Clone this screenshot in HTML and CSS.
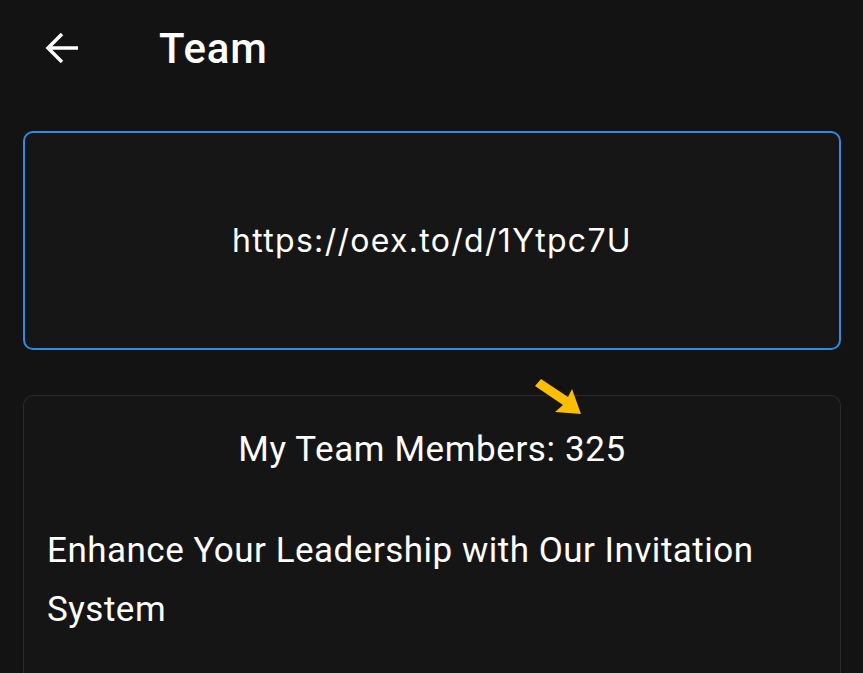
FILE: index.html
```html
<!DOCTYPE html>
<html lang="en">
<head>
  <meta charset="UTF-8">
  <title>Team</title>
  <link rel="stylesheet" href="styles.css">
</head>
<body>

  <!-- HEADER -->
  <div class="header">
    <span class="back-btn">
      <svg width="40" height="40" viewBox="0 0 40 40">
        <path d="M36 20H6M20 6L6 20L20 34" fill="none" stroke="#fff" stroke-width="3.5" stroke-linecap="butt" stroke-linejoin="miter"/>
      </svg>
    </span>
    <span class="header-title">Team</span>
  </div>

  <!-- INVITE LINK -->
  <div class="link-box">
    <span class="link-text">https://oex.to/d/1Ytpc7U</span>
  </div>

  <!-- TEAM CARD -->
  <div class="team-card">
    <svg class="pointer" width="52" height="42" viewBox="0 0 52 42">
      <path d="M1 9L7 2L34 20L38 12L47 37L21 35L29 28Z" fill="#fdbd01"/>
    </svg>
    <div class="team-count">My Team Members: 325</div>
    <p class="team-desc">Enhance Your Leadership with Our Invitation System</p>
  </div>

</body>
</html>
```

FILE: styles.css
```css
body {
  margin: 0;
  padding: 0 22px 0 23px;
  background-color: #131313;
  color: #ffffff;
  font-family: Roboto, 'Noto Sans', sans-serif;
  height: 673px;
  display: flex;
  flex-direction: column;
  overflow: hidden;
}

.header {
  height: 96px;
  flex-shrink: 0;
  display: flex;
  align-items: center;
}

.back-btn {
  display: flex;
  margin-left: 19px;
  width: 40px;
}

.header-title {
  margin-left: 77px;
  font-size: 42px;
  font-weight: 500;
  letter-spacing: 0.8px;
}

.link-box {
  margin-top: 35px;
  height: 215px;
  flex-shrink: 0;
  border: 2px solid #2f8be6;
  border-radius: 10px;
  background-color: #161616;
  display: flex;
  align-items: center;
  justify-content: center;
}

.link-text {
  font-family: Inter, Roboto, sans-serif;
  font-size: 32px;
  letter-spacing: 1.3px;
}

.team-card {
  position: relative;
  margin-top: 45px;
  flex: 1;
  border: 1px solid #2a2a2a;
  border-bottom: 0;
  border-radius: 10px 10px 0 0;
  background-color: #151515;
  padding: 0 23px;
}

.pointer {
  position: absolute;
  top: -19px;
  left: 510px;
}

.team-count {
  margin-top: 30px;
  text-align: center;
  font-size: 35px;
  line-height: 48px;
  letter-spacing: 0.6px;
}

.team-desc {
  margin: 47px 0 0;
  font-size: 35px;
  line-height: 59px;
  letter-spacing: 0.5px;
}
```
